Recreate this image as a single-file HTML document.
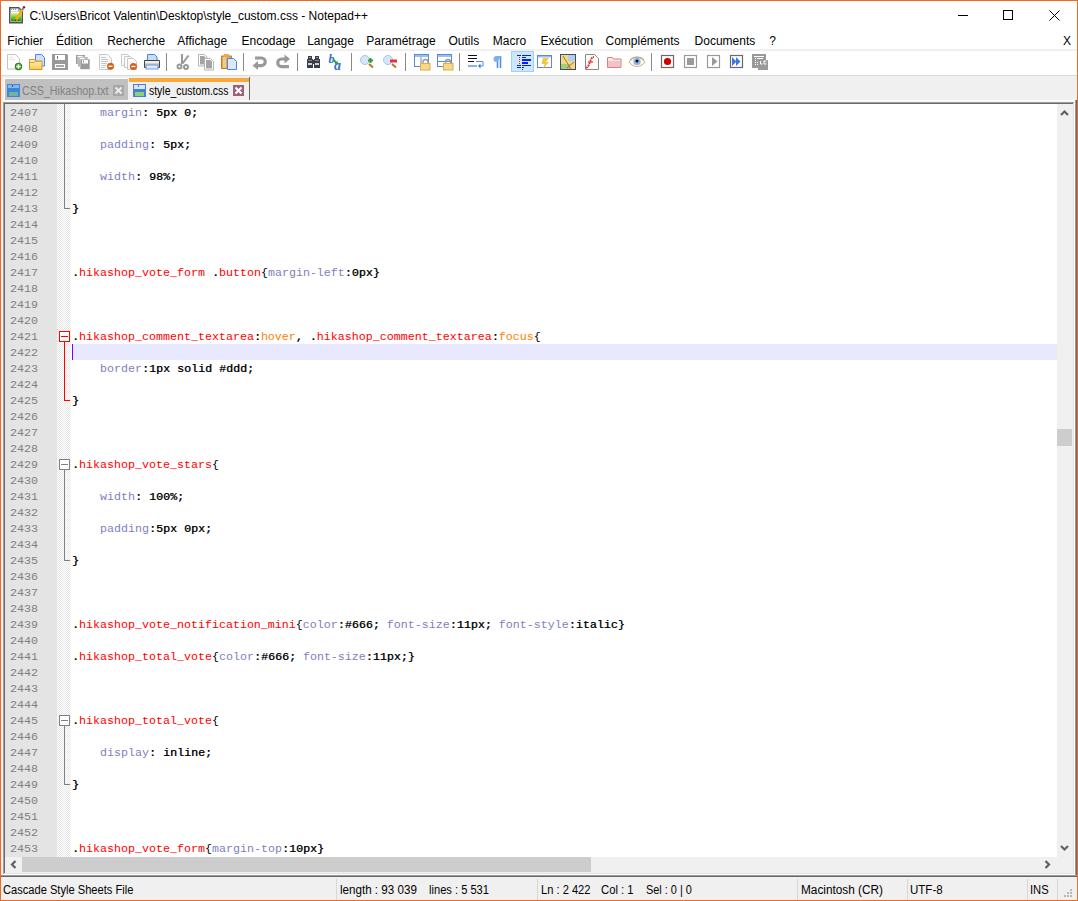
<!DOCTYPE html><html><head><meta charset="utf-8"><style>
html,body{margin:0;padding:0}
body{width:1078px;height:901px;position:relative;overflow:hidden;background:#f0f0f0}
body>div,body>svg{position:absolute}
.t{white-space:pre;line-height:normal}
.ln{position:absolute;left:10px;width:28px;text-align:right;font-family:'Liberation Mono',monospace;font-size:11.6667px;line-height:16px;height:16px;color:#808080;white-space:pre}
.cl{position:absolute;left:72px;font-family:'Liberation Mono',monospace;font-size:11.6667px;line-height:16px;height:16px;white-space:pre}
</style></head><body><div style="left:0px;top:0px;width:1078px;height:901px;background:#f0f0f0"></div><div style="left:1px;top:1px;width:1076px;height:49px;background:#fff"></div><div style="left:1px;top:49px;width:1076px;height:2px;background:#f0f0f0"></div><div style="left:1px;top:51px;width:1076px;height:24px;background:#fff"></div><div style="left:1px;top:75px;width:1076px;height:1px;background:#dadada"></div><div style="left:0px;top:0px;width:1078px;height:1px;background:#f26a1f"></div><div style="left:0px;top:0px;width:1px;height:901px;background:#f26a1f"></div><div style="left:1077px;top:0px;width:1px;height:901px;background:#f26a1f"></div><div style="left:0px;top:900px;width:1078px;height:1px;background:#f26a1f"></div><svg style="left:0;top:0" width="30" height="30" viewBox="0 0 30 30">
<defs><linearGradient id="gg" x1="0" y1="0" x2="0" y2="1"><stop offset="0" stop-color="#e6f0a0"/><stop offset="0.35" stop-color="#9ad83a"/><stop offset="1" stop-color="#138a12"/></linearGradient></defs>
<path d="M9.75 7.75h9l3.5 3.5v11.5h-12.5z" fill="#fff" stroke="#505050" stroke-width="1.5"/>
<path d="M18.75 7.75v3.5h3.5" fill="none" stroke="#8a8a8a" stroke-width="1"/>
<path d="M11 9.5h1M13 9.5h1M15 9.5h1" stroke="#888"/>
<rect x="11" y="11" width="8" height="1" fill="#c8d8e8"/>
<rect x="11" y="13" width="10.5" height="8.5" fill="url(#gg)"/>
<path d="M15.5 20.5L22.5 9.5" stroke="#f2b010" stroke-width="2.4"/>
<path d="M15.2 21L16.2 19.3" stroke="#6a5020" stroke-width="1.4"/>
<path d="M22.3 9.8L23.3 8.2" stroke="#5a7ab0" stroke-width="2"/>
<circle cx="24" cy="7.3" r="1.2" fill="#b01010"/>
</svg><div class="t" style="left:29.40px;top:9.14px;font-family:'Liberation Sans',sans-serif;font-size:12px;color:#000;">C:\Users\Bricot Valentin\Desktop\style_custom.css - Notepad++</div><div style="left:958px;top:15px;width:10px;height:1px;background:#000"></div><div style="left:1003px;top:10px;width:10px;height:10px;border:1px solid #000;box-sizing:border-box"></div><svg style="left:1049px;top:10px" width="11" height="11" viewBox="0 0 11 11"><path d="M0.5 0.5L10.5 10.5M10.5 0.5L0.5 10.5" stroke="#000" stroke-width="1"/></svg><div class="t" style="left:7.30px;top:34.14px;font-family:'Liberation Sans',sans-serif;font-size:12px;color:#000;">Fichier</div><div class="t" style="left:56.10px;top:34.14px;font-family:'Liberation Sans',sans-serif;font-size:12px;color:#000;">Édition</div><div class="t" style="left:107.20px;top:34.14px;font-family:'Liberation Sans',sans-serif;font-size:12px;color:#000;">Recherche</div><div class="t" style="left:177.30px;top:34.14px;font-family:'Liberation Sans',sans-serif;font-size:12px;color:#000;">Affichage</div><div class="t" style="left:241.50px;top:34.14px;font-family:'Liberation Sans',sans-serif;font-size:12px;color:#000;">Encodage</div><div class="t" style="left:307.20px;top:34.14px;font-family:'Liberation Sans',sans-serif;font-size:12px;color:#000;">Langage</div><div class="t" style="left:366.30px;top:34.14px;font-family:'Liberation Sans',sans-serif;font-size:12px;color:#000;">Paramétrage</div><div class="t" style="left:448.50px;top:34.14px;font-family:'Liberation Sans',sans-serif;font-size:12px;color:#000;">Outils</div><div class="t" style="left:492.80px;top:34.14px;font-family:'Liberation Sans',sans-serif;font-size:12px;color:#000;">Macro</div><div class="t" style="left:540.40px;top:34.14px;font-family:'Liberation Sans',sans-serif;font-size:12px;color:#000;">Exécution</div><div class="t" style="left:605.50px;top:34.14px;font-family:'Liberation Sans',sans-serif;font-size:12px;color:#000;">Compléments</div><div class="t" style="left:694.60px;top:34.14px;font-family:'Liberation Sans',sans-serif;font-size:12px;color:#000;">Documents</div><div class="t" style="left:769.30px;top:34.14px;font-family:'Liberation Sans',sans-serif;font-size:12px;color:#000;">?</div><div class="t" style="left:1063.00px;top:34.14px;font-family:'Liberation Sans',sans-serif;font-size:12px;color:#000;">X</div><svg style="left:0;top:50px" width="800" height="25" viewBox="0 50 800 25">
<!-- separators -->
<g fill="#8a8a8a">
<rect x="166" y="53" width="1" height="18"/><rect x="243" y="53" width="1" height="18"/><rect x="297" y="53" width="1" height="18"/>
<rect x="351" y="53" width="1" height="18"/><rect x="405" y="53" width="1" height="18"/><rect x="459" y="53" width="1" height="18"/>
<rect x="651" y="53" width="1" height="18"/>
</g>
<!-- 1 new -->
<path d="M7.5 54.5h8l4 4v10.5h-12z" fill="#fdfdfd" stroke="#c4c4c4"/>
<path d="M9 57.5h4M9 59.5h6" stroke="#e4e4e4"/>
<circle cx="18.5" cy="66.5" r="3.7" fill="#2a7a1c"/>
<circle cx="18.5" cy="66.3" r="2.8" fill="#4aa032"/>
<path d="M18.5 64.3v4.4M16.3 66.5h4.4" stroke="#fff" stroke-width="1.4"/>
<!-- 2 open -->
<path d="M35.5 54.5h6l3 3v8.5h-9z" fill="#cfe0fb" stroke="#4a86de"/>
<defs><linearGradient id="fy" x1="0" y1="0" x2="0" y2="1"><stop offset="0" stop-color="#fdf2c0"/><stop offset="1" stop-color="#f4cf50"/></linearGradient></defs>
<path d="M29.5 59.5h5l1 1.5h6.5v8.5h-12.5z" fill="url(#fy)" stroke="#e0902a"/>
<path d="M30 62.5h4l1.5-1h6" fill="none" stroke="#e0a040"/>
<!-- 3 save -->
<path d="M52 54h15l1 1v15h-16z" fill="#999"/>
<rect x="55" y="55" width="10" height="5" fill="#fff"/>
<rect x="57" y="56" width="1" height="3" fill="#777"/>
<rect x="55" y="64" width="10" height="4" fill="#fff"/>
<rect x="56" y="65" width="8" height="2" fill="#aaa"/>
<!-- 4 save all -->
<rect x="76" y="55" width="9" height="9" fill="#9a9a9a"/>
<rect x="77.5" y="55.8" width="5" height="1.2" fill="#fff"/>
<rect x="78" y="57" width="10" height="10" fill="#9a9a9a" stroke="#fff" stroke-width="0.6"/>
<rect x="79.5" y="57.8" width="5" height="1.2" fill="#fff"/>
<rect x="80" y="59" width="10" height="10.5" fill="#9a9a9a" stroke="#fff" stroke-width="0.6"/>
<rect x="82" y="60" width="6" height="3.5" fill="#fff"/>
<rect x="83" y="60.5" width="1" height="2" fill="#888"/>
<!-- 5 close -->
<path d="M99.5 54.5h8l4 4v11h-12z" fill="#fbfbfb" stroke="#c8c8c8"/>
<path d="M101 57.5h5M101 59.5h7M101 61.5h7M101 63.5h6M101 65.5h5M101 67.5h4" stroke="#c8c8c8"/>
<circle cx="110.5" cy="66.3" r="3.5" fill="#e05a10"/>
<rect x="108.5" y="65.6" width="4" height="1.4" fill="#fff"/>
<!-- 6 close all -->
<path d="M121.5 54.5h6l2 2v9h-8z" fill="#fbfbfb" stroke="#c8c8c8"/>
<path d="M124.5 56.5h6l2 2v9h-8z" fill="#fbfbfb" stroke="#c8c8c8"/>
<path d="M127.5 58.5h6l3 3v8h-9z" fill="#fbfbfb" stroke="#c8c8c8"/>
<circle cx="133.4" cy="66.5" r="3.5" fill="#e05a10"/>
<rect x="131.4" y="65.8" width="4" height="1.4" fill="#fff"/>
<!-- 7 print -->
<path d="M147.5 54.5h7l2.5 2.5v4h-9.5z" fill="#c6dcf8" stroke="#4a86de"/>
<path d="M144.5 60.5h15v7h-15z" fill="#cfcfcf" stroke="#444"/>
<rect x="145" y="61" width="14" height="2" fill="#eee"/>
<rect x="146" y="65" width="12" height="4" fill="#dfe9f8" stroke="#4a86de" stroke-width="0.8"/>
<!-- 8 cut -->
<g stroke="#999" fill="none" stroke-width="2">
<path d="M182 54v10M188.5 55.5l-6 8"/>
<circle cx="179.5" cy="66.5" r="2"/><circle cx="186" cy="67" r="2"/>
</g>
<!-- 9 copy -->
<path d="M198.5 54.5h6l2.5 2.5v9h-8.5z" fill="#fff" stroke="#b4b4b4"/>
<path d="M200 56h4l1.5 1.5v7h-5.5z" fill="#a4a4a4"/>
<path d="M204.5 58.5h6l3 3v8.5h-9z" fill="#fff" stroke="#b4b4b4"/>
<path d="M206 60h4.5l1.5 1.5v7h-6z" fill="#a4a4a4"/>
<!-- 10 paste -->
<rect x="221" y="55.5" width="11" height="13.5" rx="1" fill="#c07a28"/>
<rect x="222" y="56.5" width="9" height="11.5" fill="#e8a850"/>
<rect x="223" y="57" width="3" height="11" fill="#f4c880"/>
<rect x="224" y="54" width="5" height="3" fill="#d8b060"/>
<path d="M227.5 58.5h6l3 3v8h-9z" fill="#dbe8fb" stroke="#4a86de"/>
<!-- 11 undo -->
<path d="M255 58h6.5a3.8 3.8 0 0 1 0 7.6h-4" fill="none" stroke="#999" stroke-width="3.2"/>
<path d="M252.5 65.6l5.5-4.5v9z" fill="#999"/>
<!-- 12 redo -->
<path d="M287 59h-5.5a3.8 3.8 0 0 0 0 7.6h7.5" fill="none" stroke="#999" stroke-width="3.2"/>
<path d="M290 59l-5.5-4.5v9z" fill="#999"/>
<!-- 13 find -->
<g fill="#3a3f46">
<rect x="308" y="56" width="4" height="3"/><rect x="315" y="56" width="4" height="3"/>
<rect x="307" y="59" width="6" height="9"/><rect x="314" y="59" width="6" height="9"/>
<rect x="312" y="60" width="3" height="4"/>
</g>
<rect x="309" y="57" width="2" height="1" fill="#8a96a8"/><rect x="316" y="57" width="2" height="1" fill="#8a96a8"/>
<rect x="308" y="60" width="4" height="1" fill="#7a8698"/><rect x="315" y="60" width="4" height="1" fill="#7a8698"/>
<rect x="308" y="63" width="4" height="2" fill="#c8d0dc"/><rect x="315" y="63" width="4" height="2" fill="#c8d0dc"/>
<!-- 14 replace -->
<text x="328.5" y="62.5" font-family="Liberation Serif" font-style="italic" font-weight="bold" font-size="12" fill="#2f6fe0">b</text>
<text x="334" y="70" font-family="Liberation Serif" font-style="italic" font-weight="bold" font-size="14" fill="#2f6fe0">a</text>
<path d="M333 59.5l4 4" stroke="#30a040" stroke-width="1.8"/>
<path d="M338.5 65l-1-4-3 3z" fill="#30a040"/>
<!-- 15 zoom in -->
<circle cx="365" cy="60" r="4.5" fill="#d6e6f8" stroke="#a8c4e8"/>
<path d="M369 64l4 3.5" stroke="#b07838" stroke-width="2"/>
<path d="M370.5 58v5M368 60.5h5" stroke="#3a9a30" stroke-width="2"/>
<!-- 16 zoom out -->
<circle cx="388" cy="60" r="4.5" fill="#d6e6f8" stroke="#a8c4e8"/>
<path d="M392 64l4 3.5" stroke="#b07838" stroke-width="2"/>
<rect x="390" y="59.5" width="7" height="3" fill="#e83040"/>
<!-- 17 sync v -->
<rect x="414.5" y="54.5" width="14" height="12" fill="#fff" stroke="#5b8ad0"/>
<rect x="415" y="55" width="13" height="2" fill="#9cc0ee"/>
<path d="M421 57v9" stroke="#5b8ad0"/>
<path d="M423 64v-2a2.5 2.5 0 0 1 5 0v2" fill="none" stroke="#9a9a9a" stroke-width="1.4"/>
<rect x="420.5" y="63.5" width="9.5" height="6.5" fill="#f6d888" stroke="#dcae50"/>
<!-- 18 sync h -->
<rect x="437.5" y="54.5" width="14" height="12" fill="#fff" stroke="#5b8ad0"/>
<rect x="438" y="55" width="13" height="2" fill="#9cc0ee"/>
<path d="M438 61.5h13" stroke="#5b8ad0"/>
<path d="M445.5 64v-2a2.5 2.5 0 0 1 5 0v2" fill="none" stroke="#9a9a9a" stroke-width="1.4"/>
<rect x="443.5" y="63.5" width="9.5" height="6.5" fill="#f6d888" stroke="#dcae50"/>
<!-- 19 wrap -->
<rect x="468" y="55" width="9" height="1" fill="#111"/>
<rect x="468" y="58" width="9" height="1" fill="#111"/>
<rect x="468" y="61" width="6" height="1" fill="#111"/>
<path d="M476 61.5h7v4.5h-4" fill="none" stroke="#5b8ad0"/>
<path d="M478 66l2.5-2.5v5z" fill="#3a78e0"/>
<rect x="468" y="65" width="9" height="2" fill="#8ab4ec"/>
<!-- 20 pilcrow -->
<path d="M497.5 56v12M500.5 56v12" stroke="#5090e8" stroke-width="1.6"/>
<path d="M501 56h-4.5a3 3 0 0 0 0 6h1" fill="#80b0f0"/>
<!-- 21 indent guide (highlight) -->
<rect x="511.5" y="51.5" width="22" height="20" fill="#cce8ff" stroke="#99d1ff"/>
<g fill="#0a1ee8">
<rect x="517" y="55" width="4" height="1"/><rect x="522" y="55" width="9" height="1"/>
<rect x="522" y="57" width="4" height="1"/>
<rect x="522" y="59" width="9" height="2"/>
<rect x="522" y="62" width="6" height="2"/>
<rect x="517" y="65" width="4" height="1"/><rect x="522" y="65" width="9" height="1"/>
<rect x="517" y="67" width="4" height="1"/><rect x="522" y="67" width="2" height="1"/>
<rect x="522" y="69" width="1" height="1"/>
</g>
<g fill="#e02020"><rect x="519" y="57" width="1" height="1"/><rect x="519" y="59" width="1" height="1"/><rect x="519" y="61" width="1" height="1"/><rect x="519" y="63" width="1" height="1"/></g>
<!-- 22 UDL -->
<rect x="537.5" y="55.5" width="14" height="12" fill="#fff" stroke="#5b8ad0"/>
<rect x="538" y="56" width="13" height="1.5" fill="#9cc0ee"/>
<path d="M543 58l6 0-3 4h3l-6 7 1.5-5h-3z" fill="#f0c840"/>
<!-- 23 doc map -->
<rect x="560.5" y="54.5" width="15" height="15" fill="#e8e080" stroke="#4a4a60"/>
<rect x="568" y="55" width="7" height="6" fill="#b0d0f0"/>
<rect x="561" y="64" width="9" height="5" fill="#9cd070"/>
<path d="M563 56l8 13M574 62l-7 6" stroke="#e85050"/>
<!-- 24 function list -->
<path d="M585.5 54.5h9l4 4v11h-13z" fill="#fcfcf6" stroke="#8a8a8a"/>
<path d="M586 68c2-1 3-3 4-6s2-5 4-5" fill="none" stroke="#e83040" stroke-width="1.8" stroke-dasharray="2 0.6"/>
<path d="M588 62h5" stroke="#e83040" stroke-width="1.2"/>
<!-- 25 folder workspace -->
<path d="M607.5 57.5h5l1 1.5h7.5v8.5h-13.5z" fill="#fae4e4" stroke="#d88080"/>
<rect x="608" y="61" width="12" height="6" fill="#f0c4c4"/>
<!-- 26 eye -->
<path d="M629 62c4-6 12-6 16 0c-4 6-12 6-16 0z" fill="#f6f6f6" stroke="#d8b070"/>
<circle cx="637" cy="61.5" r="3.6" fill="#8cb4e4"/>
<circle cx="637" cy="61" r="1.5" fill="#111"/>
<path d="M630 60c3-4 11-4 14 0" fill="none" stroke="#a0a0a0"/>
<!-- 27 record -->
<rect x="661.5" y="55.5" width="12" height="12" fill="#fff" stroke="#6a6a6a" stroke-width="1.2"/>
<circle cx="667.5" cy="61.5" r="3.6" fill="#d00000"/>
<!-- 28 stop -->
<rect x="684.5" y="55.5" width="12" height="12" fill="#fff" stroke="#9a9a9a" stroke-width="1.2"/>
<rect x="687" y="58" width="7" height="7" fill="#9a9a9a"/>
<!-- 29 play -->
<rect x="707.5" y="55.5" width="12" height="12" fill="#fff" stroke="#9a9a9a" stroke-width="1.2"/>
<path d="M712 57l5.5 4.5-5.5 4.5z" fill="#9a9a9a"/>
<!-- 30 play multi -->
<rect x="730.5" y="55.5" width="12" height="12" fill="#fff" stroke="#6a6a6a" stroke-width="1.2"/>
<path d="M732 57l4.5 4.5-4.5 4.5zM736 57l4.5 4.5-4.5 4.5z" fill="#3a78e0"/>
<!-- 31 save macro -->
<rect x="752" y="54" width="14" height="14" fill="#9a9a9a"/>
<rect x="758" y="60" width="10" height="10" fill="#9a9a9a"/>
<rect x="754" y="56" width="10" height="1" fill="#fff"/>
<g fill="#fff"><rect x="755" y="58" width="1" height="1"/><rect x="755" y="60" width="1" height="1"/><rect x="755" y="62" width="1" height="1"/><rect x="755" y="64" width="1" height="1"/><rect x="757" y="58" width="1" height="1"/><rect x="757" y="62" width="1" height="1"/><rect x="757" y="64" width="1" height="1"/><rect x="758" y="58" width="5" height="1"/></g>
<path d="M760.5 61v3h2M764 61h2.5M764 61v3h2.5" fill="none" stroke="#fff"/>
</svg>
<div style="left:4px;top:78px;width:124px;height:1px;background:#fff"></div><div style="left:4px;top:79px;width:1px;height:21px;background:#fff"></div><div style="left:5px;top:79px;width:123px;height:21px;background:#c0c0c0"></div><svg style="left:7px;top:84px" width="13" height="13" viewBox="0 0 13 13"><rect x="0" y="0" width="13" height="13" fill="#3b87d8"/><rect x="1" y="1" width="11" height="3" fill="#8ab8ec"/><rect x="2" y="8" width="9" height="4" fill="#6fb3a0"/><rect x="5" y="1" width="1" height="2" fill="#1d5fa8"/></svg><div class="t" style="left:21.61px;top:84.14px;font-family:'Liberation Sans',sans-serif;font-size:12px;color:#808080;transform:scaleX(0.8875);transform-origin:0 0;">CSS_Hikashop.txt</div><svg style="left:113px;top:85px" width="11" height="11" viewBox="0 0 11 11"><rect width="11" height="11" fill="#a8a8a8"/><path d="M2.5 2.5L8.5 8.5M8.5 2.5L2.5 8.5" stroke="#ececec" stroke-width="2"/></svg><div style="left:129px;top:77px;width:121px;height:24px;background:#f0f0f0"></div><div style="left:129px;top:78px;width:120px;height:4px;background:#faa83a"></div><div style="left:249px;top:77px;width:1px;height:24px;background:#696969"></div><svg style="left:133px;top:84px" width="13" height="13" viewBox="0 0 13 13"><rect x="0" y="0" width="13" height="13" fill="#4a7fd0"/><rect x="1" y="1" width="11" height="4" fill="#d8e6f8"/><rect x="2" y="8" width="9" height="4" fill="#8ccf7e"/><rect x="5" y="1" width="1" height="2" fill="#4a7fd0"/></svg><div class="t" style="left:148.70px;top:84.14px;font-family:'Liberation Sans',sans-serif;font-size:12px;color:#000;transform:scaleX(0.8703);transform-origin:0 0;">style_custom.css</div><svg style="left:233px;top:85px" width="11" height="11" viewBox="0 0 11 11"><rect width="11" height="11" fill="#a0607a"/><path d="M2.5 2.5L8.5 8.5M8.5 2.5L2.5 8.5" stroke="#fff" stroke-width="2"/></svg><div style="left:2px;top:100px;width:1073px;height:1px;background:#ffffff"></div><div style="left:2px;top:101px;width:1073px;height:1px;background:#f6f6f6"></div><div style="left:3px;top:102px;width:1072px;height:1px;background:#a0a0a0"></div><div style="left:3px;top:102px;width:1px;height:773px;background:#a0a0a0"></div><div style="left:4px;top:103px;width:1070px;height:1px;background:#696969"></div><div style="left:4px;top:103px;width:1px;height:771px;background:#696969"></div><div style="left:1073px;top:103px;width:1px;height:771px;background:#e3e3e3"></div><div style="left:4px;top:873px;width:1070px;height:1px;background:#e3e3e3"></div><div style="left:1074px;top:102px;width:1px;height:773px;background:#fff"></div><div style="left:3px;top:874px;width:1072px;height:1px;background:#fff"></div><div style="left:1075px;top:100px;width:1px;height:777px;background:#9a9a9a"></div><div style="left:1076px;top:100px;width:1px;height:777px;background:#696969"></div><div style="left:1px;top:875px;width:1076px;height:1px;background:#9a9a9a"></div><div style="left:1px;top:876px;width:1076px;height:1px;background:#696969"></div><div style="left:5px;top:104px;width:1052px;height:753px;background:#fff"></div><div style="left:5px;top:104px;width:52px;height:753px;background:#e4e4e4"></div><div style="left:57px;top:104px;width:14px;height:753px;background-color:#fff;background-image:linear-gradient(45deg,#e8e8e8 25%,transparent 25%,transparent 75%,#e8e8e8 75%),linear-gradient(45deg,#e8e8e8 25%,transparent 25%,transparent 75%,#e8e8e8 75%);background-size:2px 2px;background-position:0 0,1px 1px"></div><div style="left:72px;top:344px;width:985px;height:16px;background:#e8e8ff"></div><div style="left:72px;top:344px;width:1px;height:16px;background:#8000ff"></div><div class="ln" style="top:105px">2407</div><div class="cl" style="top:105px"><span style="color:#000"> </span><span style="color:#000"> </span><span style="color:#000"> </span><span style="color:#000"> </span><span style="color:#8080c0">margin</span><span style="color:#000;text-shadow:0.5px 0 0 rgba(0,0,0,0.7)">:</span><span style="color:#000;text-shadow:0.5px 0 0 rgba(0,0,0,0.7)"> </span><span style="color:#000;text-shadow:0.5px 0 0 rgba(0,0,0,0.7)">5</span><span style="color:#000;text-shadow:0.5px 0 0 rgba(0,0,0,0.7)">p</span><span style="color:#000;text-shadow:0.5px 0 0 rgba(0,0,0,0.7)">x</span><span style="color:#000;text-shadow:0.5px 0 0 rgba(0,0,0,0.7)"> </span><span style="color:#000;text-shadow:0.5px 0 0 rgba(0,0,0,0.7)">0</span><span style="color:#000;text-shadow:0.5px 0 0 rgba(0,0,0,0.7)">;</span></div><div class="ln" style="top:121px">2408</div><div class="ln" style="top:137px">2409</div><div class="cl" style="top:137px"><span style="color:#000"> </span><span style="color:#000"> </span><span style="color:#000"> </span><span style="color:#000"> </span><span style="color:#8080c0">padding</span><span style="color:#000;text-shadow:0.5px 0 0 rgba(0,0,0,0.7)">:</span><span style="color:#000;text-shadow:0.5px 0 0 rgba(0,0,0,0.7)"> </span><span style="color:#000;text-shadow:0.5px 0 0 rgba(0,0,0,0.7)">5</span><span style="color:#000;text-shadow:0.5px 0 0 rgba(0,0,0,0.7)">p</span><span style="color:#000;text-shadow:0.5px 0 0 rgba(0,0,0,0.7)">x</span><span style="color:#000;text-shadow:0.5px 0 0 rgba(0,0,0,0.7)">;</span></div><div class="ln" style="top:153px">2410</div><div class="ln" style="top:169px">2411</div><div class="cl" style="top:169px"><span style="color:#000"> </span><span style="color:#000"> </span><span style="color:#000"> </span><span style="color:#000"> </span><span style="color:#8080c0">width</span><span style="color:#000;text-shadow:0.5px 0 0 rgba(0,0,0,0.7)">:</span><span style="color:#000;text-shadow:0.5px 0 0 rgba(0,0,0,0.7)"> </span><span style="color:#000;text-shadow:0.5px 0 0 rgba(0,0,0,0.7)">9</span><span style="color:#000;text-shadow:0.5px 0 0 rgba(0,0,0,0.7)">8</span><span style="color:#000;text-shadow:0.5px 0 0 rgba(0,0,0,0.7)">%</span><span style="color:#000;text-shadow:0.5px 0 0 rgba(0,0,0,0.7)">;</span></div><div class="ln" style="top:185px">2412</div><div class="ln" style="top:201px">2413</div><div class="cl" style="top:201px"><span style="color:#000;text-shadow:0.5px 0 0 rgba(0,0,0,0.7)">}</span></div><div class="ln" style="top:217px">2414</div><div class="ln" style="top:233px">2415</div><div class="ln" style="top:249px">2416</div><div class="ln" style="top:265px">2417</div><div class="cl" style="top:265px"><span style="color:#000;text-shadow:0.5px 0 0 rgba(0,0,0,0.7)">.</span><span style="color:#ff0000">hikashop_vote_form</span><span style="color:#000"> </span><span style="color:#000;text-shadow:0.5px 0 0 rgba(0,0,0,0.7)">.</span><span style="color:#ff0000">button</span><span style="color:#000">{</span><span style="color:#8080c0">margin-left</span><span style="color:#000;text-shadow:0.5px 0 0 rgba(0,0,0,0.7)">:</span><span style="color:#000;text-shadow:0.5px 0 0 rgba(0,0,0,0.7)">0</span><span style="color:#000;text-shadow:0.5px 0 0 rgba(0,0,0,0.7)">p</span><span style="color:#000;text-shadow:0.5px 0 0 rgba(0,0,0,0.7)">x</span><span style="color:#000;text-shadow:0.5px 0 0 rgba(0,0,0,0.7)">}</span></div><div class="ln" style="top:281px">2418</div><div class="ln" style="top:297px">2419</div><div class="ln" style="top:313px">2420</div><div class="ln" style="top:329px">2421</div><div class="cl" style="top:329px"><span style="color:#000;text-shadow:0.5px 0 0 rgba(0,0,0,0.7)">.</span><span style="color:#ff0000">hikashop_comment_textarea</span><span style="color:#000;text-shadow:0.5px 0 0 rgba(0,0,0,0.7)">:</span><span style="color:#ff8000">hover</span><span style="color:#000;text-shadow:0.5px 0 0 rgba(0,0,0,0.7)">,</span><span style="color:#000"> </span><span style="color:#000;text-shadow:0.5px 0 0 rgba(0,0,0,0.7)">.</span><span style="color:#ff0000">hikashop_comment_textarea</span><span style="color:#000;text-shadow:0.5px 0 0 rgba(0,0,0,0.7)">:</span><span style="color:#ff8000">focus</span><span style="color:#000">{</span></div><div class="ln" style="top:345px">2422</div><div class="ln" style="top:361px">2423</div><div class="cl" style="top:361px"><span style="color:#000"> </span><span style="color:#000"> </span><span style="color:#000"> </span><span style="color:#000"> </span><span style="color:#8080c0">border</span><span style="color:#000;text-shadow:0.5px 0 0 rgba(0,0,0,0.7)">:</span><span style="color:#000;text-shadow:0.5px 0 0 rgba(0,0,0,0.7)">1</span><span style="color:#000;text-shadow:0.5px 0 0 rgba(0,0,0,0.7)">p</span><span style="color:#000;text-shadow:0.5px 0 0 rgba(0,0,0,0.7)">x</span><span style="color:#000;text-shadow:0.5px 0 0 rgba(0,0,0,0.7)"> </span><span style="color:#000;text-shadow:0.5px 0 0 rgba(0,0,0,0.7)">s</span><span style="color:#000;text-shadow:0.5px 0 0 rgba(0,0,0,0.7)">o</span><span style="color:#000;text-shadow:0.5px 0 0 rgba(0,0,0,0.7)">l</span><span style="color:#000;text-shadow:0.5px 0 0 rgba(0,0,0,0.7)">i</span><span style="color:#000;text-shadow:0.5px 0 0 rgba(0,0,0,0.7)">d</span><span style="color:#000;text-shadow:0.5px 0 0 rgba(0,0,0,0.7)"> </span><span style="color:#000;text-shadow:0.5px 0 0 rgba(0,0,0,0.7)">#</span><span style="color:#000;text-shadow:0.5px 0 0 rgba(0,0,0,0.7)">d</span><span style="color:#000;text-shadow:0.5px 0 0 rgba(0,0,0,0.7)">d</span><span style="color:#000;text-shadow:0.5px 0 0 rgba(0,0,0,0.7)">d</span><span style="color:#000;text-shadow:0.5px 0 0 rgba(0,0,0,0.7)">;</span></div><div class="ln" style="top:377px">2424</div><div class="ln" style="top:393px">2425</div><div class="cl" style="top:393px"><span style="color:#000;text-shadow:0.5px 0 0 rgba(0,0,0,0.7)">}</span></div><div class="ln" style="top:409px">2426</div><div class="ln" style="top:425px">2427</div><div class="ln" style="top:441px">2428</div><div class="ln" style="top:457px">2429</div><div class="cl" style="top:457px"><span style="color:#000;text-shadow:0.5px 0 0 rgba(0,0,0,0.7)">.</span><span style="color:#ff0000">hikashop_vote_stars</span><span style="color:#000">{</span></div><div class="ln" style="top:473px">2430</div><div class="ln" style="top:489px">2431</div><div class="cl" style="top:489px"><span style="color:#000"> </span><span style="color:#000"> </span><span style="color:#000"> </span><span style="color:#000"> </span><span style="color:#8080c0">width</span><span style="color:#000;text-shadow:0.5px 0 0 rgba(0,0,0,0.7)">:</span><span style="color:#000;text-shadow:0.5px 0 0 rgba(0,0,0,0.7)"> </span><span style="color:#000;text-shadow:0.5px 0 0 rgba(0,0,0,0.7)">1</span><span style="color:#000;text-shadow:0.5px 0 0 rgba(0,0,0,0.7)">0</span><span style="color:#000;text-shadow:0.5px 0 0 rgba(0,0,0,0.7)">0</span><span style="color:#000;text-shadow:0.5px 0 0 rgba(0,0,0,0.7)">%</span><span style="color:#000;text-shadow:0.5px 0 0 rgba(0,0,0,0.7)">;</span></div><div class="ln" style="top:505px">2432</div><div class="ln" style="top:521px">2433</div><div class="cl" style="top:521px"><span style="color:#000"> </span><span style="color:#000"> </span><span style="color:#000"> </span><span style="color:#000"> </span><span style="color:#8080c0">padding</span><span style="color:#000;text-shadow:0.5px 0 0 rgba(0,0,0,0.7)">:</span><span style="color:#000;text-shadow:0.5px 0 0 rgba(0,0,0,0.7)">5</span><span style="color:#000;text-shadow:0.5px 0 0 rgba(0,0,0,0.7)">p</span><span style="color:#000;text-shadow:0.5px 0 0 rgba(0,0,0,0.7)">x</span><span style="color:#000;text-shadow:0.5px 0 0 rgba(0,0,0,0.7)"> </span><span style="color:#000;text-shadow:0.5px 0 0 rgba(0,0,0,0.7)">0</span><span style="color:#000;text-shadow:0.5px 0 0 rgba(0,0,0,0.7)">p</span><span style="color:#000;text-shadow:0.5px 0 0 rgba(0,0,0,0.7)">x</span><span style="color:#000;text-shadow:0.5px 0 0 rgba(0,0,0,0.7)">;</span></div><div class="ln" style="top:537px">2434</div><div class="ln" style="top:553px">2435</div><div class="cl" style="top:553px"><span style="color:#000;text-shadow:0.5px 0 0 rgba(0,0,0,0.7)">}</span></div><div class="ln" style="top:569px">2436</div><div class="ln" style="top:585px">2437</div><div class="ln" style="top:601px">2438</div><div class="ln" style="top:617px">2439</div><div class="cl" style="top:617px"><span style="color:#000;text-shadow:0.5px 0 0 rgba(0,0,0,0.7)">.</span><span style="color:#ff0000">hikashop_vote_notification_mini</span><span style="color:#000">{</span><span style="color:#8080c0">color</span><span style="color:#000;text-shadow:0.5px 0 0 rgba(0,0,0,0.7)">:</span><span style="color:#000;text-shadow:0.5px 0 0 rgba(0,0,0,0.7)">#</span><span style="color:#000;text-shadow:0.5px 0 0 rgba(0,0,0,0.7)">6</span><span style="color:#000;text-shadow:0.5px 0 0 rgba(0,0,0,0.7)">6</span><span style="color:#000;text-shadow:0.5px 0 0 rgba(0,0,0,0.7)">6</span><span style="color:#000;text-shadow:0.5px 0 0 rgba(0,0,0,0.7)">;</span><span style="color:#000"> </span><span style="color:#8080c0">font-size</span><span style="color:#000;text-shadow:0.5px 0 0 rgba(0,0,0,0.7)">:</span><span style="color:#000;text-shadow:0.5px 0 0 rgba(0,0,0,0.7)">1</span><span style="color:#000;text-shadow:0.5px 0 0 rgba(0,0,0,0.7)">1</span><span style="color:#000;text-shadow:0.5px 0 0 rgba(0,0,0,0.7)">p</span><span style="color:#000;text-shadow:0.5px 0 0 rgba(0,0,0,0.7)">x</span><span style="color:#000;text-shadow:0.5px 0 0 rgba(0,0,0,0.7)">;</span><span style="color:#000"> </span><span style="color:#8080c0">font-style</span><span style="color:#000;text-shadow:0.5px 0 0 rgba(0,0,0,0.7)">:</span><span style="color:#000;text-shadow:0.5px 0 0 rgba(0,0,0,0.7)">i</span><span style="color:#000;text-shadow:0.5px 0 0 rgba(0,0,0,0.7)">t</span><span style="color:#000;text-shadow:0.5px 0 0 rgba(0,0,0,0.7)">a</span><span style="color:#000;text-shadow:0.5px 0 0 rgba(0,0,0,0.7)">l</span><span style="color:#000;text-shadow:0.5px 0 0 rgba(0,0,0,0.7)">i</span><span style="color:#000;text-shadow:0.5px 0 0 rgba(0,0,0,0.7)">c</span><span style="color:#000;text-shadow:0.5px 0 0 rgba(0,0,0,0.7)">}</span></div><div class="ln" style="top:633px">2440</div><div class="ln" style="top:649px">2441</div><div class="cl" style="top:649px"><span style="color:#000;text-shadow:0.5px 0 0 rgba(0,0,0,0.7)">.</span><span style="color:#ff0000">hikashop_total_vote</span><span style="color:#000">{</span><span style="color:#8080c0">color</span><span style="color:#000;text-shadow:0.5px 0 0 rgba(0,0,0,0.7)">:</span><span style="color:#000;text-shadow:0.5px 0 0 rgba(0,0,0,0.7)">#</span><span style="color:#000;text-shadow:0.5px 0 0 rgba(0,0,0,0.7)">6</span><span style="color:#000;text-shadow:0.5px 0 0 rgba(0,0,0,0.7)">6</span><span style="color:#000;text-shadow:0.5px 0 0 rgba(0,0,0,0.7)">6</span><span style="color:#000;text-shadow:0.5px 0 0 rgba(0,0,0,0.7)">;</span><span style="color:#000"> </span><span style="color:#8080c0">font-size</span><span style="color:#000;text-shadow:0.5px 0 0 rgba(0,0,0,0.7)">:</span><span style="color:#000;text-shadow:0.5px 0 0 rgba(0,0,0,0.7)">1</span><span style="color:#000;text-shadow:0.5px 0 0 rgba(0,0,0,0.7)">1</span><span style="color:#000;text-shadow:0.5px 0 0 rgba(0,0,0,0.7)">p</span><span style="color:#000;text-shadow:0.5px 0 0 rgba(0,0,0,0.7)">x</span><span style="color:#000;text-shadow:0.5px 0 0 rgba(0,0,0,0.7)">;</span><span style="color:#000;text-shadow:0.5px 0 0 rgba(0,0,0,0.7)">}</span></div><div class="ln" style="top:665px">2442</div><div class="ln" style="top:681px">2443</div><div class="ln" style="top:697px">2444</div><div class="ln" style="top:713px">2445</div><div class="cl" style="top:713px"><span style="color:#000;text-shadow:0.5px 0 0 rgba(0,0,0,0.7)">.</span><span style="color:#ff0000">hikashop_total_vote</span><span style="color:#000">{</span></div><div class="ln" style="top:729px">2446</div><div class="ln" style="top:745px">2447</div><div class="cl" style="top:745px"><span style="color:#000"> </span><span style="color:#000"> </span><span style="color:#000"> </span><span style="color:#000"> </span><span style="color:#8080c0">display</span><span style="color:#000;text-shadow:0.5px 0 0 rgba(0,0,0,0.7)">:</span><span style="color:#000;text-shadow:0.5px 0 0 rgba(0,0,0,0.7)"> </span><span style="color:#000;text-shadow:0.5px 0 0 rgba(0,0,0,0.7)">i</span><span style="color:#000;text-shadow:0.5px 0 0 rgba(0,0,0,0.7)">n</span><span style="color:#000;text-shadow:0.5px 0 0 rgba(0,0,0,0.7)">l</span><span style="color:#000;text-shadow:0.5px 0 0 rgba(0,0,0,0.7)">i</span><span style="color:#000;text-shadow:0.5px 0 0 rgba(0,0,0,0.7)">n</span><span style="color:#000;text-shadow:0.5px 0 0 rgba(0,0,0,0.7)">e</span><span style="color:#000;text-shadow:0.5px 0 0 rgba(0,0,0,0.7)">;</span></div><div class="ln" style="top:761px">2448</div><div class="ln" style="top:777px">2449</div><div class="cl" style="top:777px"><span style="color:#000;text-shadow:0.5px 0 0 rgba(0,0,0,0.7)">}</span></div><div class="ln" style="top:793px">2450</div><div class="ln" style="top:809px">2451</div><div class="ln" style="top:825px">2452</div><div class="ln" style="top:841px">2453</div><div class="cl" style="top:841px"><span style="color:#000;text-shadow:0.5px 0 0 rgba(0,0,0,0.7)">.</span><span style="color:#ff0000">hikashop_vote_form</span><span style="color:#000">{</span><span style="color:#8080c0">margin-top</span><span style="color:#000;text-shadow:0.5px 0 0 rgba(0,0,0,0.7)">:</span><span style="color:#000;text-shadow:0.5px 0 0 rgba(0,0,0,0.7)">1</span><span style="color:#000;text-shadow:0.5px 0 0 rgba(0,0,0,0.7)">0</span><span style="color:#000;text-shadow:0.5px 0 0 rgba(0,0,0,0.7)">p</span><span style="color:#000;text-shadow:0.5px 0 0 rgba(0,0,0,0.7)">x</span><span style="color:#000;text-shadow:0.5px 0 0 rgba(0,0,0,0.7)">}</span></div><div style="left:64px;top:104px;width:1px;height:105px;background:#808080"></div><div style="left:64px;top:208px;width:6px;height:1px;background:#808080"></div><div style="left:59px;top:331px;width:11px;height:11px;box-sizing:border-box;border:1px solid #ff0000;background:#fff"></div><div style="left:61px;top:336px;width:7px;height:1px;background:#ff0000"></div><div style="left:64px;top:342px;width:1px;height:59px;background:#ff0000"></div><div style="left:64px;top:400px;width:6px;height:1px;background:#ff0000"></div><div style="left:59px;top:459px;width:11px;height:11px;box-sizing:border-box;border:1px solid #808080;background:#fff"></div><div style="left:61px;top:464px;width:7px;height:1px;background:#808080"></div><div style="left:64px;top:470px;width:1px;height:91px;background:#808080"></div><div style="left:64px;top:560px;width:6px;height:1px;background:#808080"></div><div style="left:59px;top:715px;width:11px;height:11px;box-sizing:border-box;border:1px solid #808080;background:#fff"></div><div style="left:61px;top:720px;width:7px;height:1px;background:#808080"></div><div style="left:64px;top:726px;width:1px;height:59px;background:#808080"></div><div style="left:64px;top:784px;width:6px;height:1px;background:#808080"></div><div style="left:1057px;top:104px;width:16px;height:753px;background:#f0f0f0"></div><div style="left:1057px;top:429px;width:15px;height:17px;background:#cdcdcd"></div><div style="left:5px;top:857px;width:1052px;height:16px;background:#f0f0f0"></div><div style="left:22px;top:857px;width:569px;height:15px;background:#cdcdcd"></div><div style="left:1057px;top:857px;width:16px;height:16px;background:#f0f0f0"></div><svg style="left:0;top:0" width="1078" height="901" viewBox="0 0 1078 901"><g fill="none" stroke="#606060" stroke-width="2.2" stroke-linecap="butt" stroke-linejoin="miter"><path d="M1061 115L1064.5 111.5L1068 115"/><path d="M1061 846L1064.5 849.5L1068 846"/><path d="M15.5 861L12 864.5L15.5 868"/><path d="M1045.5 861L1049 864.5L1045.5 868"/></g></svg><div style="left:336px;top:879px;width:1px;height:21px;background:#d7d7d7"></div><div style="left:537px;top:879px;width:1px;height:21px;background:#d7d7d7"></div><div style="left:797px;top:879px;width:1px;height:21px;background:#d7d7d7"></div><div style="left:907px;top:879px;width:1px;height:21px;background:#d7d7d7"></div><div style="left:1027px;top:879px;width:1px;height:21px;background:#d7d7d7"></div><div style="left:1057px;top:879px;width:1px;height:21px;background:#d7d7d7"></div><div class="t" style="left:3.07px;top:883.14px;font-family:'Liberation Sans',sans-serif;font-size:12px;color:#000;transform:scaleX(0.9259);transform-origin:0 0;">Cascade Style Sheets File</div><div class="t" style="left:340.23px;top:883.14px;font-family:'Liberation Sans',sans-serif;font-size:12px;color:#000;transform:scaleX(0.9679);transform-origin:0 0;">length : 93 039</div><div class="t" style="left:428.77px;top:883.14px;font-family:'Liberation Sans',sans-serif;font-size:12px;color:#000;transform:scaleX(0.9270);transform-origin:0 0;">lines : 5 531</div><div class="t" style="left:540.67px;top:883.14px;font-family:'Liberation Sans',sans-serif;font-size:12px;color:#000;transform:scaleX(0.9269);transform-origin:0 0;">Ln : 2 422</div><div class="t" style="left:601.46px;top:883.14px;font-family:'Liberation Sans',sans-serif;font-size:12px;color:#000;transform:scaleX(0.9394);transform-origin:0 0;">Col : 1</div><div class="t" style="left:646.39px;top:883.14px;font-family:'Liberation Sans',sans-serif;font-size:12px;color:#000;transform:scaleX(0.9082);transform-origin:0 0;">Sel : 0 | 0</div><div class="t" style="left:800.62px;top:883.14px;font-family:'Liberation Sans',sans-serif;font-size:12px;color:#000;transform:scaleX(0.9841);transform-origin:0 0;">Macintosh (CR)</div><div class="t" style="left:910.34px;top:883.14px;font-family:'Liberation Sans',sans-serif;font-size:12px;color:#000;transform:scaleX(0.9606);transform-origin:0 0;">UTF-8</div><div class="t" style="left:1030.07px;top:883.14px;font-family:'Liberation Sans',sans-serif;font-size:12px;color:#000;transform:scaleX(0.9316);transform-origin:0 0;">INS</div><div style="left:1070px;top:889px;width:2px;height:2px;background:#b8b8b8"></div><div style="left:1067px;top:892px;width:2px;height:2px;background:#b8b8b8"></div><div style="left:1070px;top:892px;width:2px;height:2px;background:#b8b8b8"></div><div style="left:1064px;top:895px;width:2px;height:2px;background:#b8b8b8"></div><div style="left:1067px;top:895px;width:2px;height:2px;background:#b8b8b8"></div><div style="left:1070px;top:895px;width:2px;height:2px;background:#b8b8b8"></div></body></html>
